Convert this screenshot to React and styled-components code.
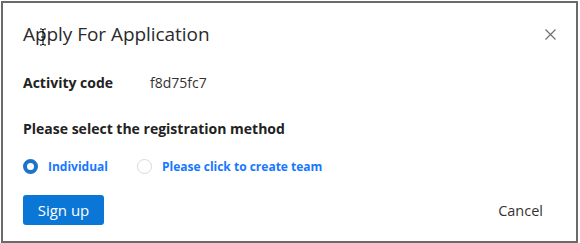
import React, { useState } from "react";
import styled, { createGlobalStyle } from "styled-components";

const Global = createGlobalStyle`
  html, body { margin: 0; padding: 0; background: #ffffff; }
  body { font-family: "Open Sans", "Noto Sans", sans-serif; }
  * { box-sizing: border-box; }
`;

const Frame = styled.div`
  position: relative;
  margin: 1px 0 0 1px;
  width: 577px;
  height: 242px;
  border: 2px solid #6a6a6a;
  background: #fff;
  padding: 0 20px 0 20px;
  display: flex;
  flex-direction: column;
`;

const Header = styled.div`
  display: flex;
  align-items: center;
  justify-content: space-between;
  height: 62px;
`;

const Title = styled.h1`
  margin: 0;
  font-size: 19px;
  font-weight: 400;
  color: #2b2b2b;
  letter-spacing: -0.05px;
`;

const Close = styled.button`
  border: none;
  background: none;
  padding: 0;
  width: 12px;
  height: 12px;
  display: flex;
  align-items: center;
  justify-content: center;
  margin-right: 0;
  cursor: pointer;
`;

const Row = styled.div`
  display: flex;
  align-items: center;
  height: ${(p) => p.$h}px;
`;

const Label = styled.span`
  font-size: 14px;
  font-weight: 700;
  color: #222;
  width: 127px;
`;

const Value = styled.span`
  font-size: 14px;
  color: #333;
`;

const Section = styled.div`
  font-size: 14px;
  font-weight: 700;
  color: #222;
`;

const Radios = styled.div`
  display: flex;
  align-items: center;
  gap: 29px;
`;

const RadioLabel = styled.label`
  display: flex;
  align-items: center;
  gap: 10px;
  font-size: 12px;
  font-weight: 700;
  color: #1677ff;
  cursor: pointer;
`;

const Dot = styled.span`
  width: 15px;
  height: 15px;
  border-radius: 50%;
  border: ${(p) => (p.$on ? "4px solid #1d72cc" : "1px solid #d6d9e0")};
  background: #fff;
  display: inline-block;
`;

const Footer = styled.div`
  display: flex;
  align-items: center;
  justify-content: space-between;
  margin-top: 20px;
`;

const Primary = styled.button`
  border: none;
  border-radius: 3px;
  background: #0a76d6;
  color: #fff;
  font-family: inherit;
  font-size: 15px;
  height: 30px;
  width: 81px;
  padding: 0;
`;

const Ghost = styled.button`
  border: none;
  background: none;
  color: #333;
  font-family: inherit;
  font-size: 14.5px;
  padding: 0;
  margin-right: 13px;
`;

const Cursor = styled.svg`
  position: absolute;
  left: 36px;
  top: 25px;
`;

export default function App() {
  const [mode, setMode] = useState("individual");
  return (
    <>
      <Global />
      <Frame>
        <Header>
          <Title>Apply For Application</Title>
          <Close aria-label="close">
            <svg width="11" height="11" viewBox="0 0 11 11">
              <path d="M0.5 0.5 L10.5 10.5 M10.5 0.5 L0.5 10.5" stroke="#6b6b6b" strokeWidth="1.1" />
            </svg>
          </Close>
        </Header>
        <Row $h={34}>
          <Label>Activity code</Label>
          <Value>f8d75fc7</Value>
        </Row>
        <Row $h={58}>
          <Section>Please select the registration method</Section>
        </Row>
        <Row $h={18}>
          <Radios>
            <RadioLabel onClick={() => setMode("individual")}>
              <Dot $on={mode === "individual"} />
              Individual
            </RadioLabel>
            <RadioLabel onClick={() => setMode("team")}>
              <Dot $on={mode === "team"} />
              Please click to create team
            </RadioLabel>
          </Radios>
        </Row>
        <Footer>
          <Primary>Sign up</Primary>
          <Ghost>Cancel</Ghost>
        </Footer>
        <Cursor width="8" height="18" viewBox="0 0 8 18">
          <path d="M1 1 H3 L4 2 L5 1 H7 M4 2 V16 M1 17 H3 L4 16 L5 17 H7 M2 9 H6" stroke="#000" strokeWidth="1" fill="none" />
        </Cursor>
      </Frame>
    </>
  );
}
